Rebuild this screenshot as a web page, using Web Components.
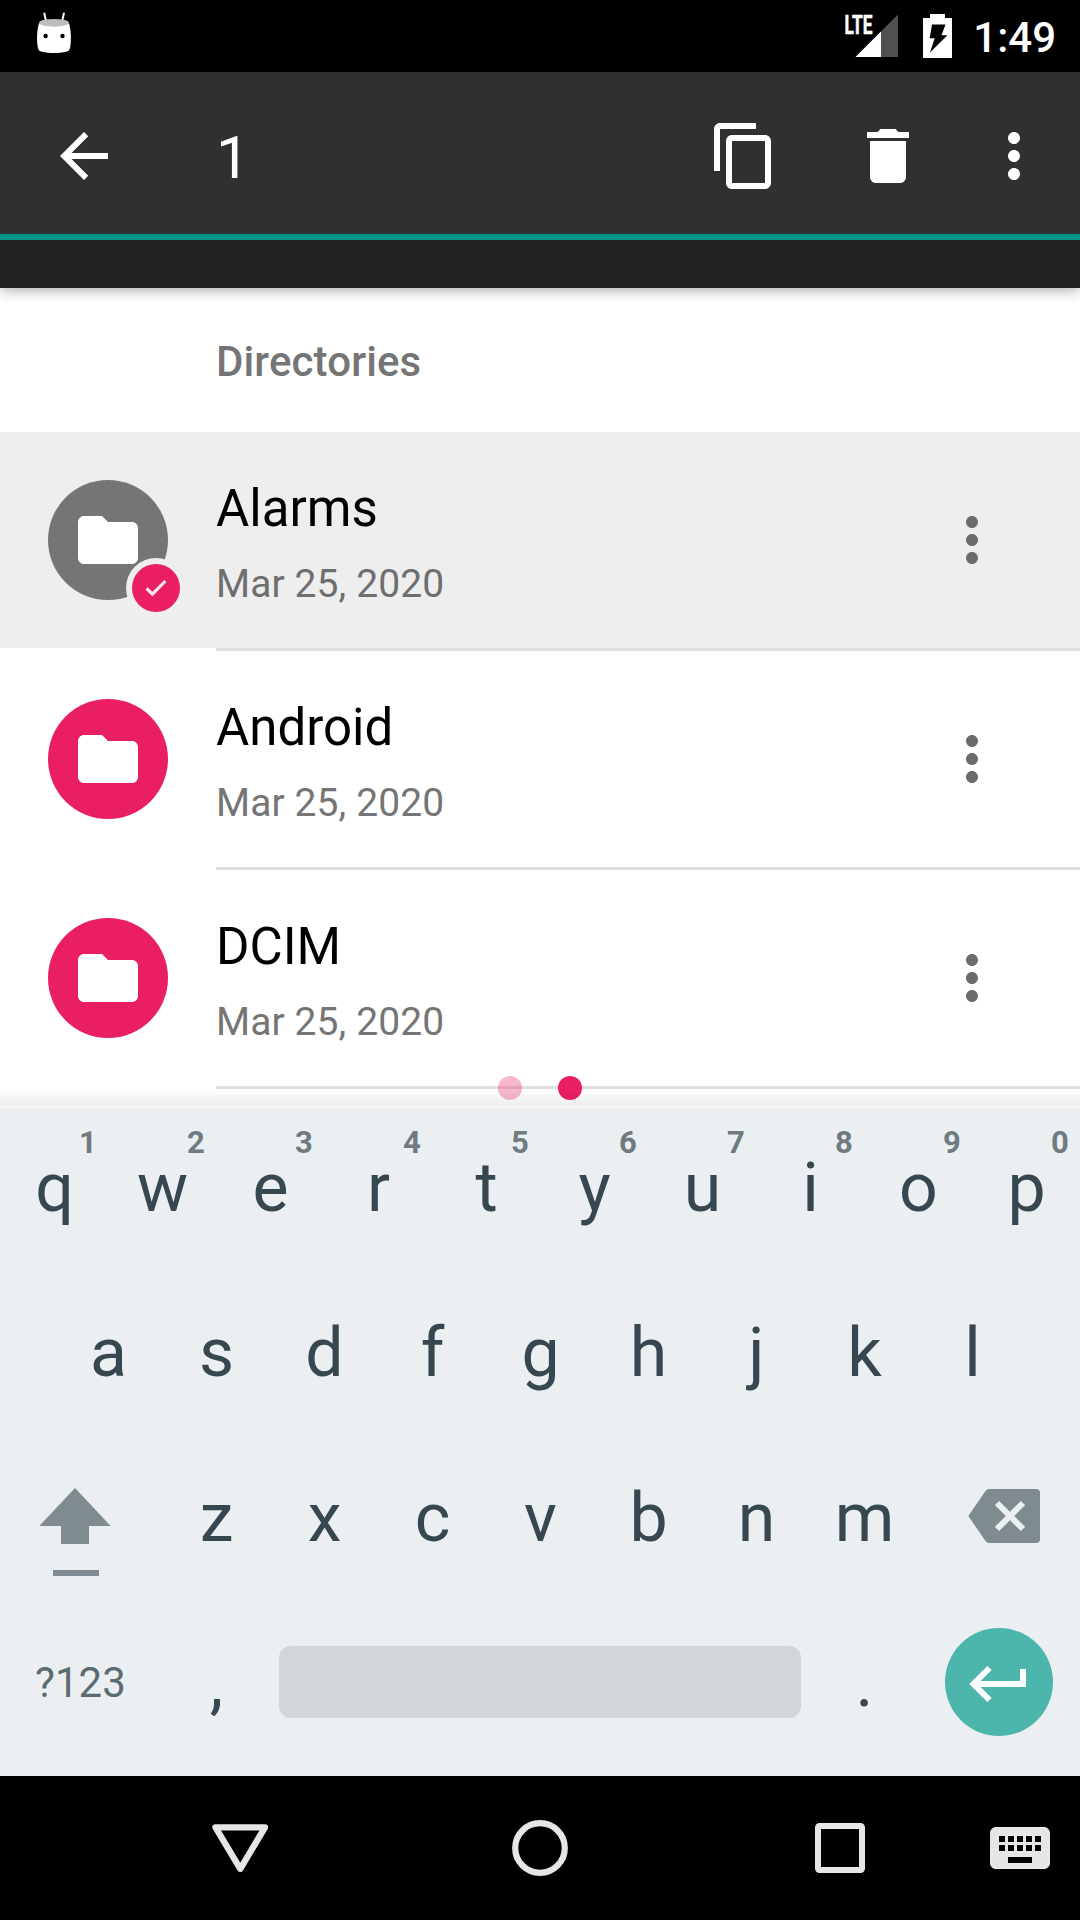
<!DOCTYPE html>
<html lang="en">
<head>
<meta charset="utf-8">
<title>Files</title>
<style>
html,body{margin:0;padding:0;background:#000}
body{width:1080px;height:1920px;overflow:hidden;font-family:Roboto,"Noto Sans",sans-serif}
</style>
</head>
<body>
<phone-screen>
  <status-bar time="1:49"></status-bar>
  <action-bar heading="1"></action-bar>
  <file-pane>
    <section-header>Directories</section-header>
    <file-row date="Mar 25, 2020" selected>Alarms</file-row>
    <file-row date="Mar 25, 2020">Android</file-row>
    <file-row date="Mar 25, 2020">DCIM</file-row>
  </file-pane>
  <soft-keyboard></soft-keyboard>
  <nav-bar></nav-bar>
</phone-screen>
<script>
function define(name, render) {
  customElements.define(name, class extends HTMLElement {
    constructor() { super(); this.attachShadow({ mode: 'open' }); }
    connectedCallback() {
      this.shadowRoot.innerHTML = '<style>*{box-sizing:border-box}svg{display:block;flex:none}</style>' + render(this);
    }
  });
}

const MATERIAL = {
  back: 'M20 11H7.83l5.59-5.59L12 4l-8 8 8 8 1.41-1.41L7.83 13H20v-2z',
  copy: 'M16 1H4c-1.1 0-2 .9-2 2v14h2V3h12V1zm3 4H8c-1.1 0-2 .9-2 2v14c0 1.1.9 2 2 2h11c1.1 0 2-.9 2-2V7c0-1.1-.9-2-2-2zm0 16H8V7h11v14z',
  trash: 'M6 19c0 1.1.9 2 2 2h8c1.1 0 2-.9 2-2V7H6v12zM19 4h-3.5l-1-1h-5l-1 1H5v2h14V4z',
  more: 'M12 8c1.1 0 2-.9 2-2s-.9-2-2-2-2 .9-2 2 .9 2 2 2zm0 2c-1.1 0-2 .9-2 2s.9 2 2 2 2-.9 2-2-.9-2-2-2zm0 6c-1.1 0-2 .9-2 2s.9 2 2 2 2-.9 2-2-.9-2-2-2z',
  folder: 'M10 4H4c-1.1 0-1.99.9-1.99 2L2 18c0 1.1.9 2 2 2h16c1.1 0 2-.9 2-2V8c0-1.1-.9-2-2-2h-8l-2-2z',
  keyboard: 'M20 5H4c-1.1 0-1.99.9-1.99 2L2 17c0 1.1.9 2 2 2h16c1.1 0 2-.9 2-2V7c0-1.1-.9-2-2-2zm-9 3h2v2h-2V8zm0 3h2v2h-2v-2zM8 8h2v2H8V8zm0 3h2v2H8v-2zm-1 2H5v-2h2v2zm0-3H5V8h2v2zm9 7H8v-2h8v2zm0-4h-2v-2h2v2zm0-3h-2V8h2v2zm3 3h-2v-2h2v2zm0-3h-2V8h2v2z'
};

define('app-icon', el => `
<style>:host{display:block;flex:none;width:72px;height:72px}</style>
<svg width="72" height="72" viewBox="0 0 24 24" fill="currentColor"><path d="${MATERIAL[el.getAttribute('name')]}"/></svg>`);

define('phone-screen', () => `
<style>:host{display:flex;flex-direction:column;width:1080px;height:1920px;overflow:hidden;background:#fff}</style>
<slot></slot>`);

define('status-bar', el => `
<style>
:host{display:flex;flex:none;height:72px;background:#000;color:#fff;padding:0 24px 0 36px;justify-content:space-between}
.right{display:flex}
.time{font-size:42px;font-weight:500;line-height:75px;margin-left:21px}
</style>
<svg width="36" height="72" viewBox="0 0 36 72">
  <path d="M8.300 13.400l2 9M27.900 13.400l-2 9" stroke="#fff" stroke-width="2" stroke-linecap="round"/>
  <path d="M3 23.500C1.200 28 .4 40 1.700 46.500 2.400 50.700 3.600 51 6 51.800c7 1.600 17 1.600 24 0 2.400-.8 3.600-1.100 4.300-5.300C35.600 40 34.800 28 33 23.500z" fill="#fff"/>
  <ellipse cx="18" cy="22.800" rx="15" ry="3.900" fill="#bdbdbd"/>
  <circle cx="9.600" cy="36" r="2.200" fill="#000"/><circle cx="26.500" cy="36" r="2.200" fill="#000"/>
</svg>
<div class="right">
  <svg width="56" height="72" viewBox="844 0 56 72">
    <text x="844.500" y="33.500" font-size="25.500" font-weight="700" fill="#fff" stroke="#fff" stroke-width=".5" textLength="28" lengthAdjust="spacingAndGlyphs">LTE</text>
    <path d="M898 14.500V57H855.500z" fill="#505050"/><path d="M881 31.500V57H855.500z" fill="#fff"/>
  </svg>
  <svg width="52" height="72" viewBox="900 0 52 72">
    <path d="M930 14h15v4h7v40h-29V18h7z" fill="#fff"/>
    <path d="M932 24.500h13.500l-4 10.800h6L930 52.500l4.700-14.200h-5z" fill="#000"/>
  </svg>
  <div class="time">${el.getAttribute('time')}</div>
</div>`);

define('action-bar', el => `
<style>
:host{display:block;flex:none;position:relative;z-index:1;box-shadow:0 3px 12px rgba(0,0,0,.3);color:#fff}
.bar{display:flex;align-items:center;height:168px;padding:6px 30px 0 48px;background:#303030;border-bottom:6px solid #009688}
.title{flex:1;margin-left:96px;font-size:60px;line-height:152px;padding-top:4px}
.trash{margin:0 54px 0 72px}
.strip{height:48px;background:#212121}
</style>
<div class="bar"><app-icon name="back"></app-icon><div class="title">${el.getAttribute('heading')}</div>
<app-icon name="copy"></app-icon><app-icon class="trash" name="trash"></app-icon><app-icon name="more"></app-icon></div>
<div class="strip"></div>`);

define('file-pane', () => `
<style>
:host{display:block;position:relative;flex:none;height:818px;background:#fff;overflow:hidden}
.pages{position:absolute;left:0;right:0;top:788px;display:flex;justify-content:center;gap:36px}
.pages i{width:24px;height:24px;border-radius:50%;background:#e91e63}
.pages i:first-child{opacity:.32}
.shade{position:absolute;left:0;right:0;bottom:0;height:17px;background:linear-gradient(rgba(0,0,0,0),rgba(0,0,0,.07))}
</style>
<slot></slot><div class="pages"><i></i><i></i></div><div class="shade"></div>`);

define('section-header', () => `
<style>:host{display:block;height:144px;padding-left:216px;font-size:42px;font-weight:500;line-height:147px;letter-spacing:.12px;color:#757575}</style>
<slot></slot>`);

define('file-row', el => {
  const on = el.hasAttribute('selected');
  return `
<style>
:host{display:block}
.row{display:flex;height:216px;padding:0 72px 0 48px;background:${on ? '#eee' : '#fff'};color:#757575}
.avatar{position:relative;display:flex;align-items:center;justify-content:center;width:120px;height:120px;margin-top:48px;border-radius:50%;background:${on ? '#757575' : '#e91e63'};color:#fff}
.badge{position:absolute;left:78px;top:78px}
.text{flex:1;display:flex;flex-direction:column;gap:22px;padding:47px 0 0 48px}
.name{font-size:51px;line-height:60px;color:#000}
.date{font-size:39px;line-height:46px;letter-spacing:.1px;color:${on ? '#6e6e6e' : '#757575'}}
.more{align-self:center;color:#6b6b6b}
.rule{height:3px;margin-left:216px;background:#e0e0e0}
</style>
<div class="row">
  <div class="avatar"><app-icon name="folder"></app-icon>${on ? `
    <svg class="badge" width="60" height="60" viewBox="0 0 60 60"><circle cx="30" cy="30" r="30" fill="#eee"/><circle cx="30" cy="30" r="24" fill="#e91e63"/><path d="M20.600 30.400l5.800 5.800L39.400 23" fill="none" stroke="#fce4ec" stroke-width="3.200"/></svg>` : ''}
  </div>
  <div class="text"><div class="name"><slot></slot></div><div class="date">${el.getAttribute('date')}</div></div>
  <app-icon class="more" name="more"></app-icon>
</div>
<div class="rule"></div>`;
});

define('kb-key', el => `
<style>
:host{display:block;position:relative;flex:none;box-sizing:border-box;width:108px;height:165px;padding-left:1px;text-align:center;font-size:68px;line-height:158px;color:#37474f}
.hint{position:absolute;left:68px;width:40px;top:0;font-size:31px;font-weight:700;line-height:67px;color:#6f7b81}
</style>
<slot></slot>${el.hasAttribute('hint') ? `<div class="hint">${el.getAttribute('hint')}</div>` : ''}`);

const keys = s => [...s].map(c => `<kb-key>${c}</kb-key>`).join('');
define('soft-keyboard', () => `
<style>
:host{display:block;flex:none;height:670px;background:#ebeff2;border-top:3px solid #f4f6f8;box-sizing:border-box}
.line{display:flex;justify-content:center;height:165px}
.sym{width:162px;padding-right:1px;text-align:center;font-size:42px;line-height:157px;letter-spacing:.1px;color:#5b6b72}
.space{flex:none;width:522px;height:72px;margin:42px 9px 0;border-radius:12px;background:#d1d6d9}
</style>
<div class="line">${[...'qwertyuiop'].map((c, i) => `<kb-key hint="${(i + 1) % 10}">${c}</kb-key>`).join('')}</div>
<div class="line">${keys('asdfghjkl')}</div>
<div class="line">
  <svg width="162" height="165" viewBox="0 0 162 165" fill="#808b8f"><path d="M75 49l35.700 38H89v18H61V87H39.300z"/><path d="M53 131h46v6H53z" fill="#808b93"/></svg>
  ${keys('zxcvbnm')}
  <svg width="162" height="165" viewBox="918 1439 162 165"><path d="M989 1489h47a4 4 0 0 1 4 4v46a4 4 0 0 1-4 4h-47q-2 0-3.500-2l-17.200-25 17.200-25q1.500-2 3.500-2z" fill="#808b8f"/><path d="M997 1503l26 26m0-26l-26 26" stroke="#ebeff2" stroke-width="6"/></svg>
</div>
<div class="line">
  <div class="sym">?123</div><kb-key>,</kb-key><div class="space"></div><kb-key>.</kb-key>
  <svg width="162" height="165" viewBox="918 1604 162 165"><circle cx="999" cy="1682" r="54" fill="#4db6ac"/><path d="M989.500 1668l-16 16 16 16M972 1684h51v-15" fill="none" stroke="#fff" stroke-width="6"/></svg>
</div>`);

define('nav-bar', () => `
<style>:host{display:flex;flex:1;background:#000;color:#e6e6e6;align-items:center;padding:0 24px 0 204px}
.home{margin:0 228px}app-icon{margin-left:108px}</style>
<svg width="72" height="72" viewBox="204 1812 72 72"><path d="M215.500 1827.300h49.500L240.300 1868.800z" fill="none" stroke="currentColor" stroke-width="6.300" stroke-linejoin="round"/></svg>
<svg class="home" width="72" height="72"><circle cx="36" cy="36" r="24.800" fill="none" stroke="currentColor" stroke-width="6.200"/></svg>
<svg width="72" height="72"><rect x="14" y="14" width="44" height="44" rx="1.500" fill="none" stroke="currentColor" stroke-width="6"/></svg>
<app-icon name="keyboard"></app-icon>`);
</script>
</body>
</html>
